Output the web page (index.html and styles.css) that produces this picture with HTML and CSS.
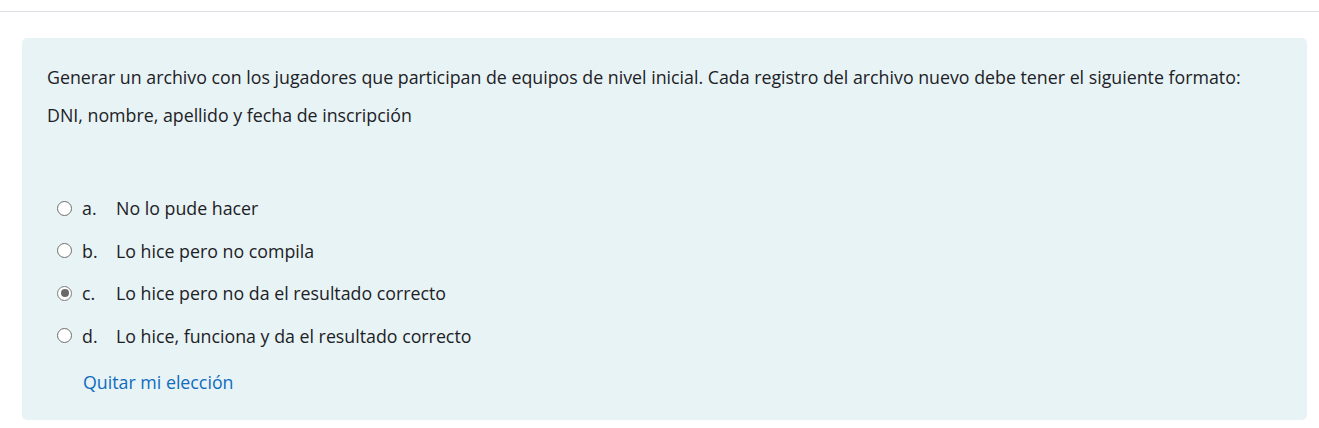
FILE: index.html
```html
<!DOCTYPE html>
<html lang="es">
<head>
<meta charset="utf-8">
<title>Pregunta</title>
<link rel="stylesheet" href="styles.css">
</head>
<body>
<div class="topbar"></div>
<div class="page">
  <div class="formulation">
    <div class="qtext">
      <p>Generar un archivo con los jugadores que participan de equipos de nivel inicial. Cada registro del archivo nuevo debe tener el siguiente formato:</p>
      <p>DNI, nombre, apellido y fecha de inscripción</p>
    </div>
    <div class="answers">
      <label class="opt"><span class="radio"></span><span class="letter">a.</span><span class="txt">No lo pude hacer</span></label>
      <label class="opt"><span class="radio"></span><span class="letter">b.</span><span class="txt">Lo hice pero no compila</span></label>
      <label class="opt"><span class="radio checked"></span><span class="letter">c.</span><span class="txt">Lo hice pero no da el resultado correcto</span></label>
      <label class="opt"><span class="radio"></span><span class="letter">d.</span><span class="txt">Lo hice, funciona y da el resultado correcto</span></label>
    </div>
    <a class="clear" href="#">Quitar mi elección</a>
  </div>
</div>
</body>
</html>
```

FILE: styles.css
```css
html, body {
  margin: 0;
  padding: 0;
  background: #fff;
}
body {
  font-family: "Open Sans", "Noto Sans", sans-serif;
  font-size: 17.8px;
  color: #1d2125;
}
.topbar {
  height: 11px;
  border-bottom: 1px solid #dee2e6;
}
.page {
  padding: 26px 12px 0 22px;
}
.formulation {
  background: #e7f3f5;
  border-radius: 5px;
  padding: 28px 25px 27px 25px;
  height: 382px;
  box-sizing: border-box;
}
.qtext p {
  margin: 0 0 15px 0;
  line-height: 22.5px;
}
.answers {
  margin-top: 61px;
  display: flex;
  flex-direction: column;
}
.opt {
  display: flex;
  align-items: center;
  height: 42.5px;
  padding-left: 10px;
}
.radio {
  width: 13px;
  height: 13px;
  border: 1.5px solid #6f6f6f;
  border-radius: 50%;
  background: #fff;
  box-sizing: content-box;
  display: inline-flex;
  align-items: center;
  justify-content: center;
  flex: none;
}
.radio.checked {
  border-color: #7d7d7d;
}
.radio.checked::after {
  content: "";
  width: 8px;
  height: 8px;
  border-radius: 50%;
  background: #6a6a6a;
}
.letter {
  margin-left: 10px;
  width: 34px;
}
.clear {
  display: inline-block;
  margin-left: 36px;
  margin-top: 14px;
  color: #0f6cbf;
  text-decoration: none;
  line-height: 22.5px;
}
```
